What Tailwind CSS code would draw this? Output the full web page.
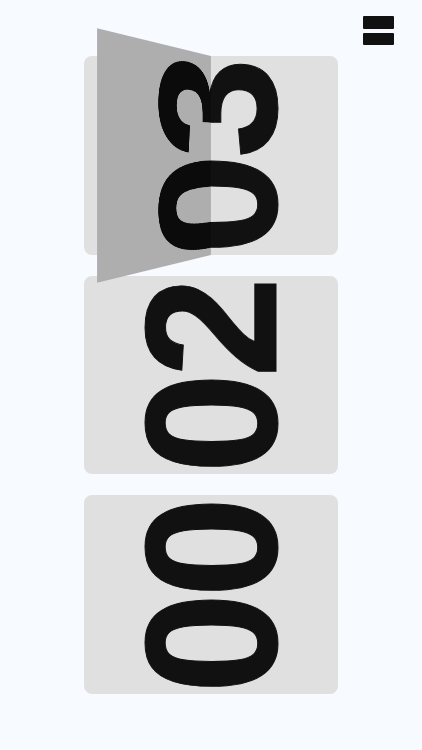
<!DOCTYPE html>
<html lang="en">
<head>
    <meta charset="UTF-8">
    <meta name="viewport" content="width=device-width, initial-scale=1.0">
    <title>Flip Clock</title>
    <script src="https://cdn.jsdelivr.net/npm/@tailwindcss/browser@4"></script>
</head>
<body class="bg-[#f7fbff] w-[422px] h-[750px] overflow-hidden font-['Liberation_Sans',Arial,sans-serif]">
<div class="relative flex flex-col items-start pl-[84px] pt-[56px] gap-[21px]">
    <!-- menu -->
    <div class="absolute top-[16px] left-[363px] flex flex-col gap-[4px]">
        <div class="w-[31px] h-[13px] bg-[#111111] rounded-[1px]"></div>
        <div class="w-[31px] h-[12px] bg-[#111111] rounded-[1px]"></div>
    </div>

    <!-- hours, mid flip -->
    <div class="relative w-[253.5px] h-[198.5px] perspective-[414px] bg-[#e0e0e0] rounded-lg flex items-center justify-center">
        <span class="-rotate-90 scale-x-[0.97] pr-[6px] text-[187px] leading-none font-bold tracking-[-5px] [-webkit-text-stroke:1px_currentColor] text-[#111111]">03</span>
        <div class="absolute left-0 top-0 bottom-0 w-1/2 origin-right rotate-y-[45.5deg] bg-[#aeaeae] overflow-hidden">
            <div class="w-[253.5px] h-full flex items-center justify-center">
                <span class="-rotate-90 scale-x-[0.97] pr-[6px] text-[187px] leading-none font-bold tracking-[-5px] [-webkit-text-stroke:1px_currentColor] text-[#0b0b0b]">03</span>
            </div>
        </div>
    </div>

    <!-- minutes -->
    <div class="w-[253.5px] h-[198.5px] bg-[#e0e0e0] rounded-lg flex items-center justify-center overflow-hidden">
        <span class="-rotate-90 scale-x-[0.97] pr-[6px] text-[187px] leading-none font-bold tracking-[-5px] [-webkit-text-stroke:1px_currentColor] text-[#111111]">02</span>
    </div>

    <!-- seconds -->
    <div class="w-[253.5px] h-[198.5px] bg-[#e0e0e0] rounded-lg flex items-center justify-center overflow-hidden">
        <span class="-rotate-90 scale-x-[0.97] pr-[6px] text-[187px] leading-none font-bold tracking-[-5px] [-webkit-text-stroke:1px_currentColor] text-[#111111]">00</span>
    </div>
</div>
</body>
</html>
